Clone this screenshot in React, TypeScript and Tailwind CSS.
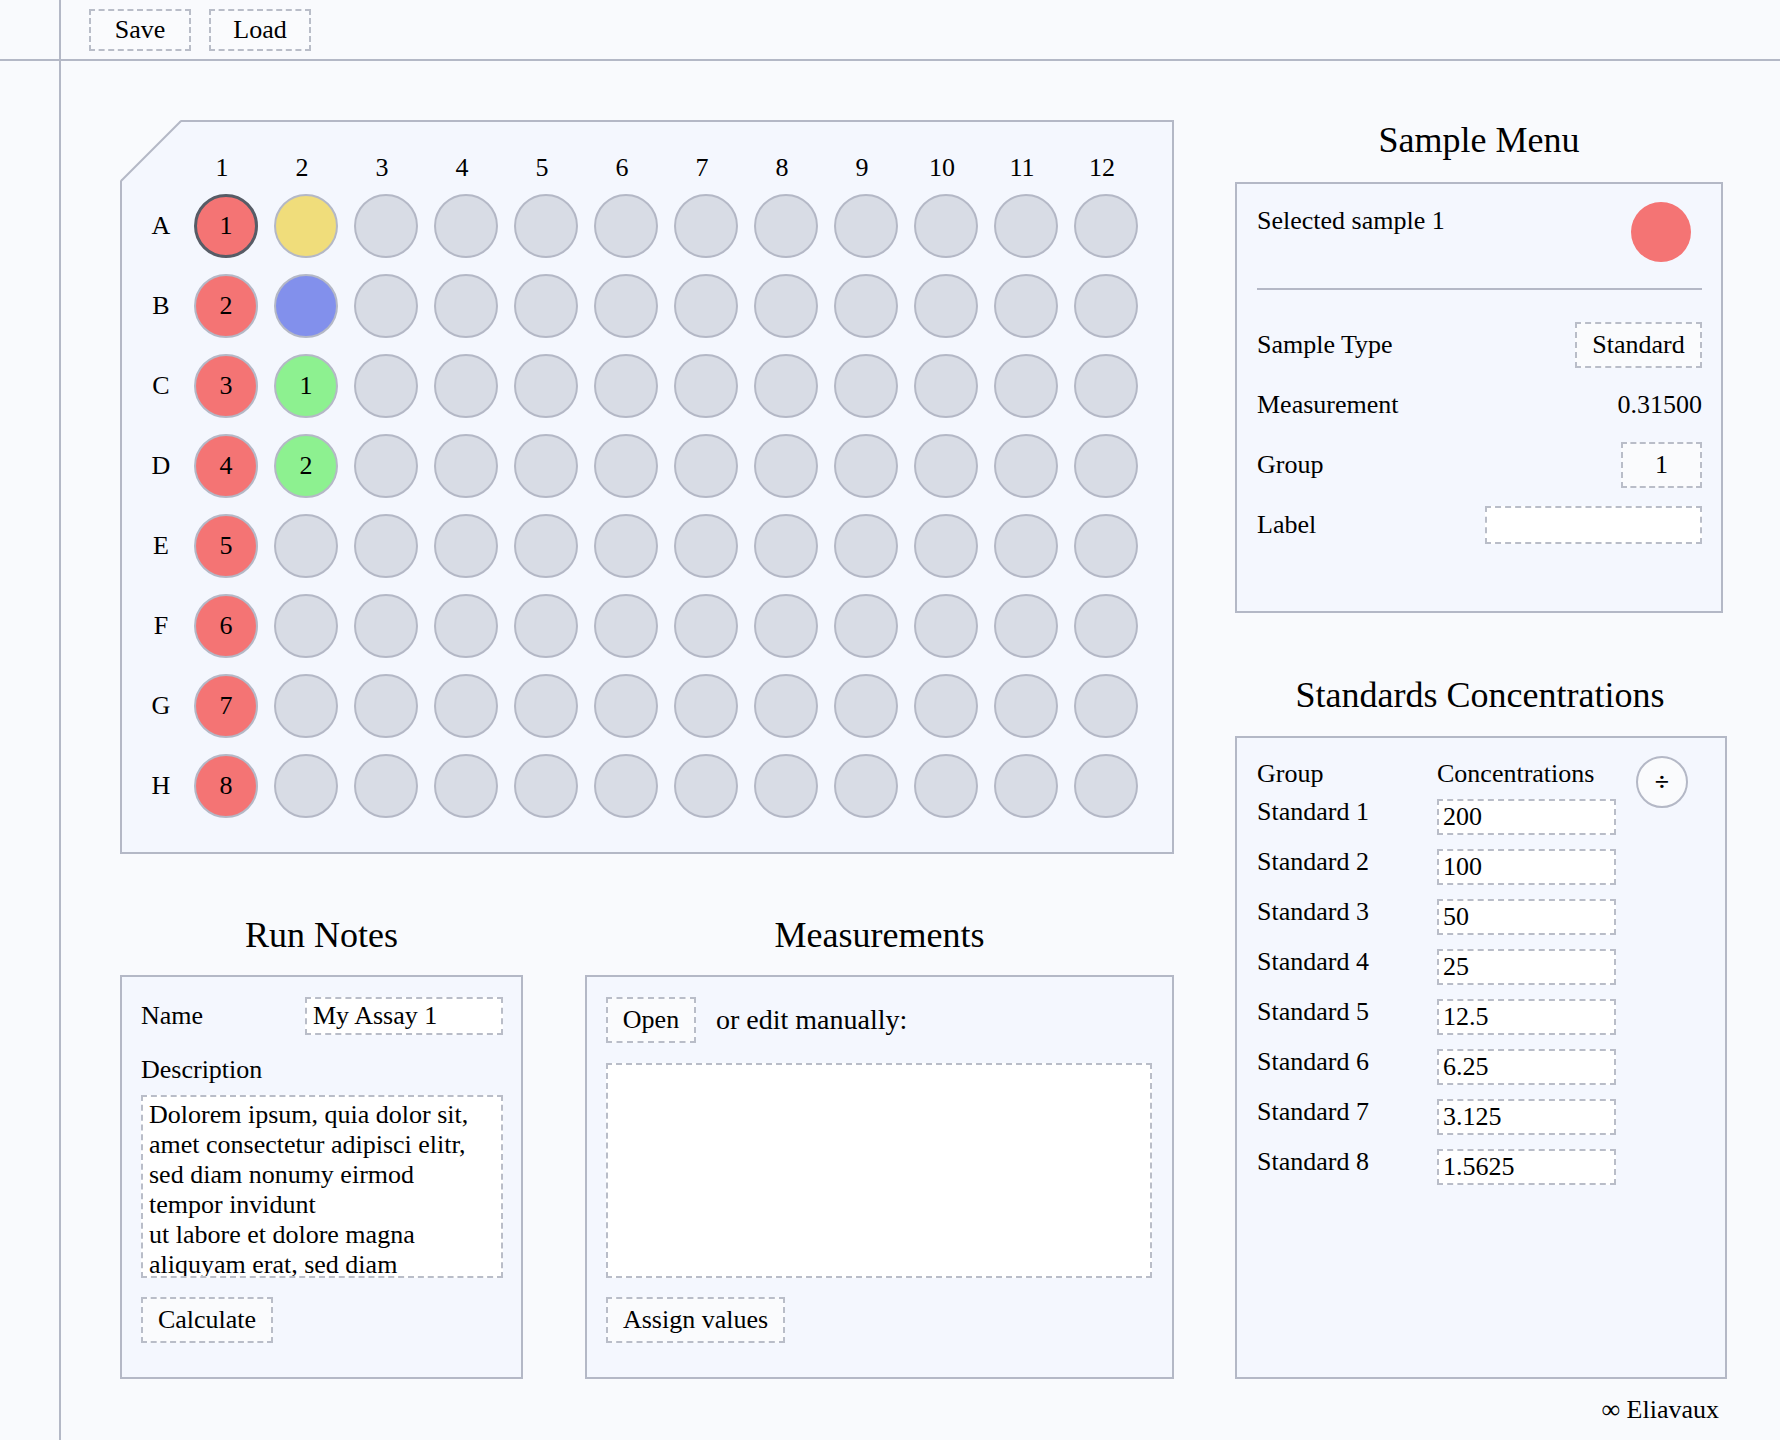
import React from 'react';

// Plate layout
const rowNames = ['A', 'B', 'C', 'D', 'E', 'F', 'G', 'H'];
const colNames = Array.from({ length: 12 }, (_, i) => i + 1);

interface Well {
  fill: string;
  label?: string;
  selected?: boolean;
}

function getWell(r: number, c: number): Well {
  if (c === 0) return { fill: 'bg-[#f47474]', label: String(r + 1), selected: r === 0 };
  if (c === 1) {
    if (r === 0) return { fill: 'bg-[#f0dd7b]' };
    if (r === 1) return { fill: 'bg-[#8290ec]' };
    if (r === 2) return { fill: 'bg-[#8df190]', label: '1' };
    if (r === 3) return { fill: 'bg-[#8df190]', label: '2' };
  }
  return { fill: 'bg-[#d8dce5]' };
}

const standards = ['200', '100', '50', '25', '12.5', '6.25', '3.125', '1.5625'];

const dashed = 'border-2 border-dashed border-[#b9bdc8]';
const panel = 'border-2 border-[#b4b8c6] bg-[#f4f7fe]';
const btn = `${dashed} bg-[#fafbfd] flex items-center justify-center`;

const description =
  'Dolorem ipsum, quia dolor sit,\namet consectetur adipisci elitr,\nsed diam nonumy eirmod\ntempor invidunt\nut labore et dolore magna\naliquyam erat, sed diam';

function Plate() {
  return (
    <div className={`relative w-[1054px] h-[734px] ${panel} pl-[12px] pt-[24px]`}>
      {/* cut corner */}
      <svg className="absolute -left-[2px] -top-[2px]" width="64" height="64" viewBox="0 0 64 64">
        <polygon points="0,0 61,0 0,61" fill="#f9fafd" />
        <line x1="61" y1="1" x2="1" y2="61" stroke="#b4b8c6" strokeWidth="2" />
      </svg>
      <div className="grid grid-cols-[52px_repeat(12,80px)]">
        <div className="h-10" />
        {colNames.map((c) => (
          <div key={c} className="h-10 pt-[4px] pr-[8px] flex items-center justify-center">
            {c}
          </div>
        ))}
        {rowNames.map((rn, r) => (
          <React.Fragment key={rn}>
            <div className="h-20 pl-[2px] flex items-center justify-center">{rn}</div>
            {colNames.map((_, c) => {
              const w = getWell(r, c);
              return (
                <div key={c} className="h-20 flex items-center justify-center">
                  <div
                    className={`w-16 h-16 rounded-full flex items-center justify-center ${w.fill} ${
                      w.selected ? 'border-[3px] border-[#575c66]' : 'border-2 border-[#b4b8c6]'
                    }`}
                  >
                    {w.label}
                  </div>
                </div>
              );
            })}
          </React.Fragment>
        ))}
      </div>
    </div>
  );
}

function Title({ children }: { children: React.ReactNode }) {
  return <h2 className="text-[36px] leading-[40px] text-center mb-[20px]">{children}</h2>;
}

export default function App() {
  return (
    <div className="min-h-[1440px] w-full bg-[#f9fafd] text-black font-['Liberation_Serif',serif] text-[26px] leading-[30px] flex flex-col">
      {/* Top bar */}
      <header className="flex h-[61px] border-b-2 border-[#b4b8c6]">
        <div className="w-[61px] shrink-0 border-r-2 border-[#b4b8c6]" />
        <div className="flex gap-[18px] pl-[28px] pt-[9px]">
          <button className={`${btn} w-[102px] h-[42px]`}>Save</button>
          <button className={`${btn} w-[102px] h-[42px]`}>Load</button>
        </div>
      </header>

      <div className="flex flex-1">
        <aside className="w-[61px] shrink-0 border-r-2 border-[#b4b8c6]" />

        <main className="pl-[59px] pt-[59px] flex flex-col">
          <div className="flex gap-[61px]">
            {/* Left column */}
            <div className="w-[1054px] flex flex-col">
              <Plate />

              <div className="mt-[61px] flex justify-between">
                {/* Run notes */}
                <div className="w-[403px]">
                  <Title>Run Notes</Title>
                  <div className={`h-[404px] ${panel} pl-[19px] pr-[18px] pt-[20px]`}>
                    <div className="flex items-center justify-between h-[38px]">
                      <span>Name</span>
                      <input
                        readOnly
                        value="My Assay 1"
                        className={`w-[198px] h-[38px] bg-white ${dashed} pl-[6px] outline-none`}
                      />
                    </div>
                    <div className="mt-[20px]">Description</div>
                    <textarea
                      readOnly
                      value={description}
                      className={`mt-[10px] block w-full h-[183px] bg-white ${dashed} pl-[6px] pt-[3px] resize-none overflow-hidden outline-none`}
                    />
                    <button className={`${btn} mt-[19px] w-[132px] h-[46px]`}>Calculate</button>
                  </div>
                </div>

                {/* Measurements */}
                <div className="w-[589px]">
                  <Title>Measurements</Title>
                  <div className={`h-[404px] ${panel} pl-[19px] pt-[20px]`}>
                    <div className="flex items-center">
                      <button className={`${btn} w-[90px] h-[46px]`}>Open</button>
                      <span className="ml-[20px] text-[28px]">or edit manually:</span>
                    </div>
                    <textarea
                      readOnly
                      className={`mt-[20px] block w-[546px] h-[215px] bg-white ${dashed} resize-none overflow-hidden outline-none`}
                    />
                    <button className={`${btn} mt-[19px] w-[179px] h-[46px]`}>Assign values</button>
                  </div>
                </div>
              </div>
            </div>

            {/* Right column */}
            <div className="w-[492px] flex flex-col">
              <h2 className="text-[36px] leading-[40px] text-center mb-[22px] pr-[4px]">Sample Menu</h2>
              <div className={`w-[488px] h-[431px] ${panel} pl-[20px] pr-[19px] pt-[18px]`}>
                <div className="flex justify-between items-start">
                  <span className="mt-[4px]">Selected sample 1</span>
                  <div className="w-[60px] h-[60px] rounded-full bg-[#f47474] mr-[11px]" />
                </div>
                <div className="mt-[26px] h-[2px] bg-[#b4b8c6]" />
                <div className="mt-[25px]">
                  <div className="h-[60px] flex items-center justify-between">
                    <span>Sample Type</span>
                    <div className={`${btn} w-[127px] h-[46px]`}>Standard</div>
                  </div>
                  <div className="h-[60px] flex items-center justify-between">
                    <span>Measurement</span>
                    <span>0.31500</span>
                  </div>
                  <div className="h-[60px] flex items-center justify-between">
                    <span>Group</span>
                    <input
                      readOnly
                      value="1"
                      className={`w-[81px] h-[46px] bg-[#fafbfd] ${dashed} text-center outline-none`}
                    />
                  </div>
                  <div className="h-[60px] flex items-center justify-between">
                    <span>Label</span>
                    <input readOnly className={`w-[217px] h-[38px] bg-white ${dashed} outline-none`} />
                  </div>
                </div>
              </div>

              <h2 className="mt-[62px] text-[36px] leading-[40px] text-center mb-[21px] pr-[2px]">
                Standards Concentrations
              </h2>
              <div className={`h-[643px] ${panel} pl-[20px] pt-[21px] flex items-start`}>
                <div className="w-[359px]">
                  <div className="flex h-[30px]">
                    <span className="w-[180px]">Group</span>
                    <span>Concentrations</span>
                  </div>
                  <div className="mt-[10px]">
                    {standards.map((v, i) => (
                      <div key={i} className="flex items-start h-[50px]">
                        <span className="w-[180px] leading-[26px]">Standard {i + 1}</span>
                        <input
                          readOnly
                          value={v}
                          className={`w-[179px] h-[36px] bg-white ${dashed} pl-[4px] outline-none`}
                        />
                      </div>
                    ))}
                  </div>
                </div>
                <button className="ml-[20px] -mt-[3px] w-[52px] h-[52px] rounded-full border-2 border-[#b4b8c6] bg-[#fafbfd] flex items-center justify-center text-[26px] font-bold leading-none">
                  ÷
                </button>
              </div>
            </div>
          </div>

          <footer className="mt-[16px] text-right pr-[8px]">∞ Eliavaux</footer>
        </main>
      </div>
    </div>
  );
}
